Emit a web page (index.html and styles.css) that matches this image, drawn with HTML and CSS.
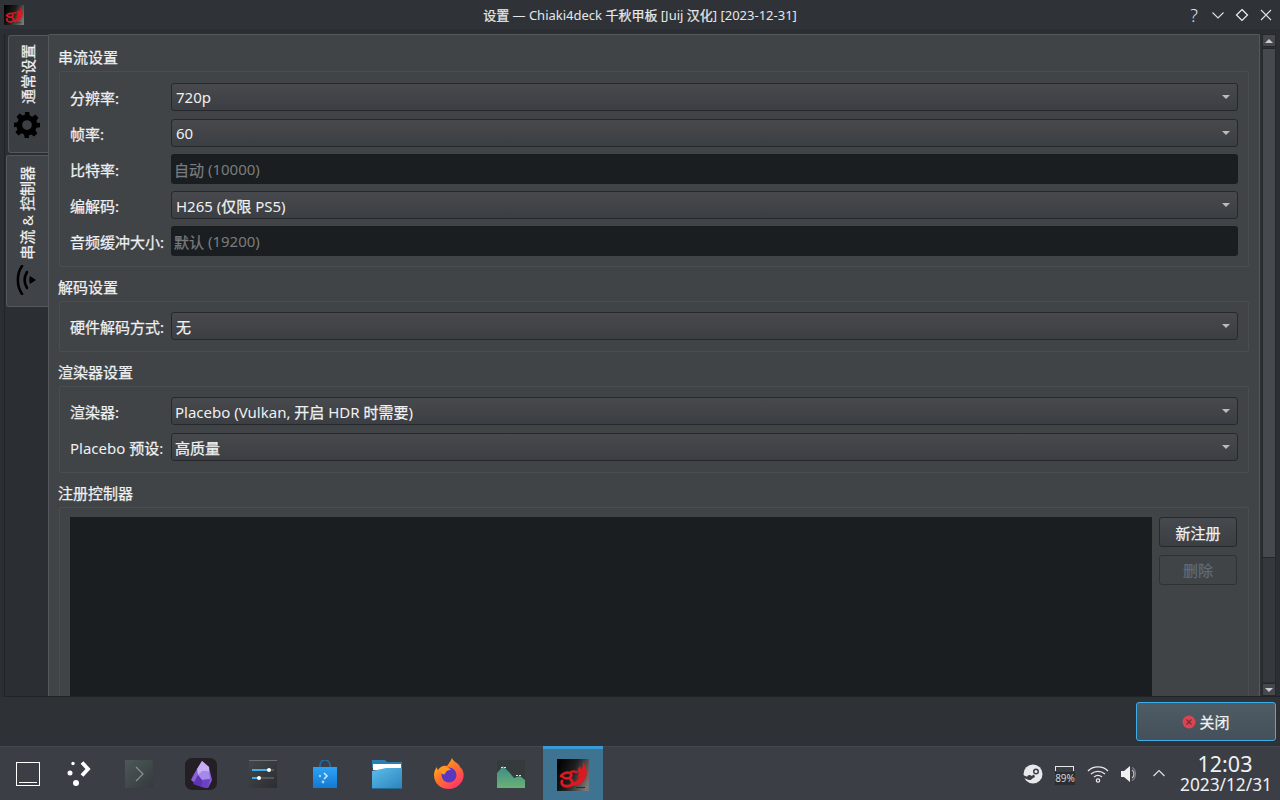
FILE: index.html
```html
<!DOCTYPE html>
<html lang="zh">
<head>
<meta charset="utf-8">
<title>设置</title>
<link rel="stylesheet" href="styles.css">
</head>
<body>
<svg class="defs" width="0" height="0" aria-hidden="true">
  <defs>
    <linearGradient id="logoBg" x1="0" y1="0.3" x2="1" y2="0.7">
      <stop offset="0" stop-color="#030303"/><stop offset="0.45" stop-color="#1e1e1e"/><stop offset="1" stop-color="#777"/>
    </linearGradient>
    <symbol id="logo" viewBox="0 0 32 32">
      <rect width="32" height="32" fill="url(#logoBg)"/>
      <g fill="none" stroke="#dc1820" stroke-linecap="round">
        <path stroke-width="2.800" d="M4 17c2-3 6-4 9-3 2 1 2 4-1 5-2 .6-5 .3-6-1"/>
        <path stroke-width="2.800" d="M13 20c2 1 3 3 2 5-2 3-8 3-10 0-.6-1-.6-2 0-3"/>
        <path stroke-width="2.400" d="M14 13c2-1 3-1 5 0"/>
      </g>
      <path fill="#dc1820" d="M26 3c3 4 5 10 3 15-2 6-8 9-14 9l-1-3c5-1 8-4 9-7l-4 3c2-3 3-5 3-8l-2 3c0-3 1-6 3-8l1 4c2-3 2-5 2-8z"/>
      <rect x="19" y="28" width="9" height="1" fill="#2b2b2b"/>
    </symbol>
  </defs>
</svg>

<div class="window">
  <header class="titlebar">
    <svg class="title-logo"><use href="#logo"/></svg>
    <div class="title-text"><span class="zh">设置</span> — Chiaki4deck <span class="zh">千秋甲板</span> [Juij <span class="zh">汉化</span>] [2023-12-31]</div>
    <div class="title-btns">
      <span class="help">?</span>
      <svg class="tb-icon" viewBox="0 0 16 16"><path d="M2.500 5.500L8 11l5.500-5.500" fill="none" stroke="#dfe1e3" stroke-width="1.100"/></svg>
      <svg class="tb-icon" viewBox="0 0 16 16"><path d="M8 2.500L13.500 8 8 13.500 2.500 8z" fill="none" stroke="#eff0f1" stroke-width="1.200"/></svg>
      <svg class="tb-icon" viewBox="0 0 16 16"><path d="M3 3l10 10M13 3L3 13" fill="none" stroke="#dfe1e3" stroke-width="1.100"/></svg>
    </div>
  </header>

  <main class="main">
    <nav class="tabs">
      <div class="tab">
        <span class="tab-label"><span class="zh">通常设置</span></span>
        <svg class="tab-icon" viewBox="0 0 24 24"><path fill="#000" fill-rule="evenodd" d="M10 0h4l.6 3.300 2.300 1 2.800-1.900 2.900 2.900-1.900 2.800 1 2.300L24 10v4l-3.300.6-1 2.300 1.900 2.800-2.900 2.900-2.800-1.900-2.300 1L13.900 24h-4l-.6-3.300-2.300-1-2.800 1.900-2.900-2.900 1.900-2.800-1-2.300L0 14v-4l3.200-.6 1-2.300-1.900-2.800 2.900-2.900 2.800 1.900 2.300-1zM12 7.500a4.500 4.500 0 1 0 0 9 4.500 4.500 0 0 0 0-9z"/></svg>
      </div>
      <div class="tab tab-active">
        <span class="tab-label"><span class="zh">串流</span> &amp; <span class="zh">控制器</span></span>
        <svg class="tab-icon wifi" viewBox="0 0 22 30"><g fill="none" stroke="#000" stroke-width="2.600" stroke-linecap="round"><path d="M7 1C1.500 9 1.500 21 7 29"/><path d="M12 7c-3 5-3 11 0 16"/></g><path d="M15 11l6 4-6 4c-1-2.500-1-5.500 0-8z" fill="#000"/></svg>
      </div>
    </nav>

    <section class="panel">
      <h2 class="group-title zh">串流设置</h2>
      <div class="group group-first">
        <div class="row"><span class="label zh">分辨率:</span><div class="combo"><span class="val">720p</span><i class="arrow"></i></div></div>
        <div class="row"><span class="label zh">帧率:</span><div class="combo"><span class="val">60</span><i class="arrow"></i></div></div>
        <div class="row"><span class="label zh">比特率:</span><div class="edit"><span class="zh">自动</span>&nbsp;(10000)</div></div>
        <div class="row"><span class="label zh">编解码:</span><div class="combo"><span class="val">H265 (<span class="zh">仅限</span> PS5)</span><i class="arrow"></i></div></div>
        <div class="row"><span class="label zh">音频缓冲大小:</span><div class="edit"><span class="zh">默认</span>&nbsp;(19200)</div></div>
      </div>
      <h2 class="group-title zh">解码设置</h2>
      <div class="group">
        <div class="row"><span class="label zh">硬件解码方式:</span><div class="combo"><span class="val zh">无</span><i class="arrow"></i></div></div>
      </div>
      <h2 class="group-title zh">渲染器设置</h2>
      <div class="group">
        <div class="row"><span class="label zh">渲染器:</span><div class="combo combo-tight"><span class="val">Placebo (Vulkan, <span class="zh">开启</span> HDR <span class="zh">时需要</span>)</span><i class="arrow"></i></div></div>
        <div class="row"><span class="label">Placebo <span class="zh">预设</span>:</span><div class="combo combo-tight"><span class="val zh">高质量</span><i class="arrow"></i></div></div>
      </div>
      <h2 class="group-title zh">注册控制器</h2>
      <div class="group group-last">
        <div class="list"></div>
        <div class="list-btns">
          <button class="btn zh">新注册</button>
          <button class="btn btn-off zh">删除</button>
        </div>
      </div>
    </section>

    <aside class="scrollbar">
      <div class="sb-btn"><i class="sb-up"></i></div>
      <div class="sb-track"><div class="sb-thumb"></div></div>
      <div class="sb-btn"><i class="sb-down"></i></div>
    </aside>
  </main>

  <footer class="footer">
    <button class="close">
      <svg class="close-icon" viewBox="0 0 14 14"><circle cx="7" cy="7" r="6.500" fill="#da4453"/><path d="M4.500 4.500l5 5M9.500 4.500l-5 5" stroke="#7e2a36" stroke-width="1.300"/></svg><span class="zh">关闭</span>
    </button>
  </footer>
</div>

<div class="taskbar">
  <div class="launcher">
    <div class="slot slot-desk">
      <svg width="24" height="24" viewBox="0 0 24 24"><rect x="0.500" y="0.500" width="23" height="23" fill="none" stroke="#fff"/><path d="M3 20.500h18" stroke="#fff"/></svg>
    </div>
    <div class="slot slot-kick">
      <svg width="26" height="26" viewBox="0 0 26 26"><g fill="#fff"><circle cx="6" cy="2.500" r="1.700"/><circle cx="3" cy="12" r="2.500"/><circle cx="9" cy="22" r="3"/></g><path d="M15 1.500l6 6.500-6 6.500" fill="none" stroke="#fff" stroke-width="3.800"/></svg>
    </div>
    <div class="slot">
      <svg width="28" height="28" viewBox="0 0 28 28"><defs><linearGradient id="kon" x1="0" y1="0" x2="1" y2="1"><stop offset="0" stop-color="#4d5857"/><stop offset="1" stop-color="#353a3b"/></linearGradient></defs><rect width="28" height="28" fill="url(#kon)"/><path d="M11 7l7 7-7 7" fill="none" stroke="#8b9292" stroke-width="1.200"/></svg>
    </div>
    <div class="slot">
      <svg width="32" height="32" viewBox="0 0 32 32"><rect width="32" height="32" rx="7" fill="#231f24"/><path d="M17 3l7 6 3 13-4 8-6-1-5-2-6-5 3-6z" fill="#8b5fd8"/><path d="M17 3l-5 8 1 6 5-4 6 1 0-5z" fill="#c5aef5"/><path d="M13 17l4 5 8-1-1-7-6-1z" fill="#a68aea"/><path d="M8 26l5-9 4 5 0 7z" fill="#5d35b0"/><path d="M17 22l8-1-2 9-6-1z" fill="#6a43c4"/></svg>
    </div>
    <div class="slot">
      <svg width="28" height="28" viewBox="0 0 28 28"><defs><linearGradient id="set" x1="0" y1="0" x2="1" y2="1"><stop offset="0" stop-color="#45484b"/><stop offset="1" stop-color="#2b2d30"/></linearGradient></defs><rect width="28" height="28" fill="url(#set)"/><rect y="0" width="28" height="1" fill="#6c6f72"/><path d="M3 10h22M3 18h22" stroke="#55585b" stroke-width="2"/><path d="M3 10h17M3 18h7" stroke="#3daee9" stroke-width="2"/><circle cx="20" cy="10" r="2" fill="#fff"/><circle cx="10" cy="18" r="2" fill="#fff"/></svg>
    </div>
    <div class="slot">
      <svg width="24" height="28" viewBox="0 0 24 28"><defs><linearGradient id="bag" x1="0" y1="0" x2="0" y2="1"><stop offset="0" stop-color="#2da3f5"/><stop offset="1" stop-color="#1478d4"/></linearGradient></defs><path d="M7 8V5a5 5 0 0 1 10 0v3" fill="none" stroke="#1b6fae" stroke-width="1.500"/><rect y="7" width="24" height="21" fill="url(#bag)"/><path d="M11 13l3 3-3 3" fill="none" stroke="#cfe9fb" stroke-width="1.500"/><circle cx="7" cy="16" r="1.200" fill="#9fd3f7"/><circle cx="10" cy="22" r="1.400" fill="#9fd3f7"/></svg>
    </div>
    <div class="slot">
      <svg width="30" height="30" viewBox="0 0 30 30"><defs><linearGradient id="fol" x1="0" y1="0" x2="1" y2="1"><stop offset="0" stop-color="#5dbcec"/><stop offset="1" stop-color="#2c85bc"/></linearGradient></defs><path d="M0 1h13l2 2h15v6H0z" fill="#2b7fb0"/><rect x="1" y="5" width="28" height="6" fill="#fff"/><path d="M0 12l14-3h16v20H0z" fill="url(#fol)"/><rect y="29" width="30" height="1" fill="#1f6a96"/></svg>
    </div>
    <div class="slot">
      <svg width="32" height="32" viewBox="0 0 32 32"><defs><linearGradient id="ff" x1="0" y1="0" x2="0.800" y2="1"><stop offset="0" stop-color="#ffd02e"/><stop offset="0.450" stop-color="#ff7b24"/><stop offset="1" stop-color="#ff2f6e"/></linearGradient></defs><path d="M19 0c1 3 4 4 6 6 1 1 2 2 2 3l2 2c2 4 2 7 1 10-2 6-8 10-14 10C7 31 1 25 1 17c0-3 1-6 3-8 0 1 0 2 1 3 2-3 5-5 9-4 2-3 4-5 5-8z" fill="url(#ff)"/><circle cx="16" cy="17" r="7.500" fill="#5b37c0"/><path d="M7 10c5-2 9-1 11 2-3-.5-5 1-6 4-2 1-4 0-5-6z" fill="#ff9a1f"/></svg>
    </div>
    <div class="slot">
      <svg width="28" height="28" viewBox="0 0 28 28"><defs><linearGradient id="mt" x1="0" y1="0" x2="0" y2="1"><stop offset="0" stop-color="#3e8a86"/><stop offset="1" stop-color="#69b277"/></linearGradient></defs><rect width="28" height="28" fill="#353a3b"/><path d="M0 28V13l6-7 6 6 5 6 3-1 3-1 5 4v8z" fill="url(#mt)"/><g fill="#dfe3e3"><rect x="4" y="7" width="2" height="1"/><rect x="7" y="7" width="2" height="1"/><rect x="19" y="15" width="2" height="1"/><rect x="22" y="15" width="2" height="1"/></g></svg>
    </div>
    <div class="slot slot-active">
      <svg width="32" height="32"><use href="#logo"/></svg>
    </div>
  </div>

  <div class="tray">
    <svg class="tray-i" width="20" height="20" viewBox="0 0 20 20"><circle cx="10" cy="10" r="9.500" fill="#e8e9ea"/><circle cx="13" cy="7.500" r="3" fill="#3b3e45"/><circle cx="13" cy="7.500" r="1.500" fill="#e8e9ea"/><circle cx="6.500" cy="13.500" r="2.500" fill="#3b3e45"/><path d="M0 11l6 2.500 5-3 1 2.500-5 3-7-2z" fill="#3b3e45"/></svg>
    <div class="batt"><span class="batt-top"></span><span class="batt-num">89%</span></div>
    <svg class="tray-i" width="22" height="18" viewBox="0 0 22 18"><g fill="none" stroke="#e8e9ea" stroke-width="1.300"><path d="M1 6c5-5.500 15-5.500 20 0"/><path d="M4 9c4-3.500 10-3.500 14 0"/><path d="M7 12c2.500-2 5.500-2 8 0"/></g><circle cx="11" cy="15.500" r="1.700" fill="none" stroke="#e8e9ea" stroke-width="1.200"/></svg>
    <svg class="tray-i" width="18" height="18" viewBox="0 0 18 18"><path d="M0 6h3l6-5v16l-6-5H0z" fill="#eff0f1"/><path d="M11 2.500c4.500 2 4.500 11 0 13" fill="none" stroke="#7d8084" stroke-width="1.300"/><path d="M11 5c2.500 1.500 2.500 6.500 0 8" fill="none" stroke="#b8babd" stroke-width="1.300"/></svg>
    <svg class="tray-i tray-chev" width="12" height="8" viewBox="0 0 12 8"><path d="M.5 7L6 1.500 11.500 7" fill="none" stroke="#dfe1e3" stroke-width="1.200"/></svg>
    <div class="clock">
      <div class="time">12:03</div>
      <div class="date">2023/12/31</div>
    </div>
  </div>
</div>
</body>
</html>
```

FILE: styles.css
```css
* { box-sizing: border-box; }
html, body {
  margin: 0;
  width: 1280px;
  height: 800px;
  overflow: hidden;
  background: #2b2f33;
  color: #eff0f1;
  font-family: "Noto Sans", "Noto Sans CJK SC", sans-serif;
  font-size: 15px;
}
.defs { position: absolute; }
.zh { -webkit-text-stroke: 0.25px currentColor; }

.window { height: 746px; display: flex; flex-direction: column; }

.titlebar {
  height: 29px;
  margin-bottom: 5px;
  background: #2f3338;
  display: grid;
  grid-template-columns: 1fr auto 1fr;
  align-items: center;
  flex: none;
}
.title-logo { width: 20px; height: 20px; margin-left: 4px; margin-top: 1px; }
.title-text {
  font-size: 13px;
  color: #e6e7e8;
}
.title-btns {
  display: flex;
  align-items: center;
  justify-content: flex-end;
  gap: 8px;
  padding-right: 6px;
}
.help { width: 16px; font-size: 18px; color: #dfe1e3; text-align: center; line-height: 18px; font-weight: 300; }
.tb-icon { width: 16px; height: 16px; }

.main {
  flex: 1;
  min-height: 0;
  display: flex;
  margin-left: 4px;
  border-left: 1px solid #212427;
  border-bottom: 1px solid #212427;
  overflow: hidden;
}

.tabs {
  width: 43px;
  flex: none;
  display: flex;
  flex-direction: column;
  align-items: flex-end;
  padding-top: 1px;
  gap: 2px;
}
.tab {
  width: 40px;
  height: 118px;
  background: #3b3e42;
  border: 1px solid #55585c;
  border-right: 0;
  border-radius: 3px 0 0 3px;
  display: flex;
  flex-direction: column;
  align-items: center;
  padding: 8px 2px 0 0;
  gap: 8px;
}
.tab-active {
  width: 42px;
  height: 152px;
  background: #404347;
  padding: 10px 2px 0 0;
  gap: 5px;
}
.tab-label {
  writing-mode: vertical-rl;
  text-orientation: sideways;
  transform: rotate(180deg);
  font-size: 15px;
  line-height: 18px;
  white-space: pre;
}
.tab-icon { width: 26px; height: 26px; flex: none; margin-right: 2px; }
.tab-icon.wifi { width: 22px; height: 30px; }

.panel {
  width: 1212px;
  flex: none;
  background: #414447;
  border: 1px solid #55585c;
  border-bottom: 0;
  border-radius: 2px 2px 0 0;
  padding: 2px 10px 0;
  overflow: hidden;
}
.group-title {
  margin: 0 0 0 -1px;
  font-weight: 400;
  font-size: 15px;
  height: 34px;
  padding-top: 9px;
  line-height: 22px;
  color: #eff0f1;
}
.group {
  border: 1px solid #4a4d51;
  border-radius: 2px;
  padding: 10px 10px 11px 10px;
  display: flex;
  flex-direction: column;
  gap: 8px;
}
.group-first { padding: 11px 10px 11px 10px; }
.group-last {
  flex-direction: row;
  padding: 9px 11px 0 10px;
  gap: 7px;
  height: 240px;
}
.row { display: flex; height: 28px; align-items: center; }
.label { width: 101px; flex: none; white-space: nowrap; }
.combo {
  flex: 1;
  height: 28px;
  border: 1px solid #26282b;
  border-radius: 3px;
  background: linear-gradient(#47494d, #3b3e42);
  display: flex;
  align-items: center;
  padding: 0 7px 0 4px;
}
.combo-tight { padding-left: 3px; }
.val { flex: 1; }
.arrow {
  width: 0;
  height: 0;
  border-left: 4px solid transparent;
  border-right: 4px solid transparent;
  border-top: 4px solid #b9bbbd;
}
.edit {
  flex: 1;
  height: 30px;
  border-radius: 3px;
  background: #1b1e20;
  color: #797c7f;
  display: flex;
  align-items: center;
  padding: 0 3px;
}
.list {
  flex: 1;
  background: #1b1e20;
}
.list-btns {
  width: 78px;
  flex: none;
  display: flex;
  flex-direction: column;
  gap: 8px;
}
.btn {
  height: 30px;
  font: inherit;
  color: #eff0f1;
  background: linear-gradient(#46494d, #3b3e42);
  border: 1px solid #26282b;
  border-radius: 3px;
  padding: 0;
}
.btn-off {
  color: #5e6c78;
  background: #414447;
  border-color: #2f3235;
  padding-bottom: 2px;
}

.scrollbar {
  width: 14px;
  margin-left: 2px;
  flex: none;
  display: flex;
  flex-direction: column;
  gap: 1px;
}
.sb-btn {
  height: 13px;
  flex: none;
  background: #45484c;
  border: 1px solid #26282b;
  display: flex;
  align-items: center;
  justify-content: center;
}
.sb-up { width: 0; height: 0; border: 4px solid transparent; border-top: 0; border-bottom: 4px solid #c9cbcd; }
.sb-down { width: 0; height: 0; border: 4px solid transparent; border-bottom: 0; border-top: 4px solid #c9cbcd; }
.sb-track {
  flex: 1;
  background: #35383c;
  border: 1px solid #26282b;
  border-top: 0;
  border-bottom: 0;
}
.sb-thumb {
  height: 510px;
  background: #46494d;
  border: 1px solid #26282b;
  border-left: 0;
  border-right: 0;
}

.footer {
  height: 49px;
  flex: none;
  background: #2e3136;
  display: flex;
  justify-content: flex-end;
  align-items: flex-start;
  padding: 5px 4px 0 0;
}
.close {
  width: 140px;
  height: 39px;
  border: 1px solid #3daee9;
  border-radius: 3px;
  background: linear-gradient(#4e5c66, #44505a);
  color: #eff0f1;
  font: inherit;
  display: flex;
  align-items: center;
  justify-content: center;
  gap: 3px;
}
.close-icon { width: 14px; height: 14px; }

.taskbar {
  height: 54px;
  background: #3b3e45;
  border-top: 1px solid #44474e;
  display: flex;
  justify-content: space-between;
}
.launcher { display: flex; }
.slot {
  width: 62px;
  display: flex;
  align-items: center;
  justify-content: center;
  flex: none;
}
.slot-desk { width: 56px; }
.slot-kick { width: 48px; margin-right: 4px; }
.slot-active {
  width: 60px;
  margin-top: -1px;
  margin-left: 1px;
  background: #3f7392;
  border-top: 3px solid #3a9ad6;
}
.tray { display: flex; align-items: center; gap: 12px; }
.tray-i { flex: none; }
.tray-chev { margin-left: 2px; margin-top: -1px; }
.batt {
  width: 20px;
  height: 22px;
  position: relative;
  display: flex;
  align-items: flex-end;
  justify-content: center;
}
.batt-top { position: absolute; top: 3px; left: 0; width: 19px; height: 5px; border: 1px solid #e8e9ea; border-bottom: 0; }
.batt-num { font-size: 10px; line-height: 13px; background: #2b2d31; color: #d6d8da; width: 20px; text-align: center; }
.clock { width: 90px; margin: 0 10px 0 3px; text-align: center; color: #eff0f1; white-space: nowrap; }
.time { font-size: 21.5px; line-height: 22px; }
.date { font-size: 17.3px; line-height: 19px; }
```
